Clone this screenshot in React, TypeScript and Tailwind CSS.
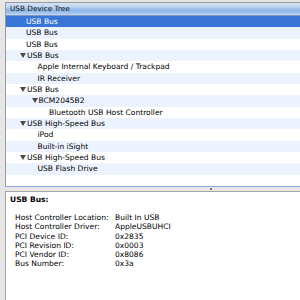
import React from "react";

type Row = { label: string; level: number; tri?: boolean };

const rows: Row[] = [
  { label: "USB Bus", level: 0 },
  { label: "USB Bus", level: 0 },
  { label: "USB Bus", level: 0 },
  { label: "USB Bus", level: 0, tri: true },
  { label: "Apple Internal Keyboard / Trackpad", level: 1 },
  { label: "IR Receiver", level: 1 },
  { label: "USB Bus", level: 0, tri: true },
  { label: "BCM2045B2", level: 1, tri: true },
  { label: "Bluetooth USB Host Controller", level: 2 },
  { label: "USB High-Speed Bus", level: 0, tri: true },
  { label: "iPod", level: 1 },
  { label: "Built-in iSight", level: 1 },
  { label: "USB High-Speed Bus", level: 0, tri: true },
  { label: "USB Flash Drive", level: 1 },
  { label: "", level: 0 },
];

const details: [string, string][] = [
  ["Host Controller Location:", "Built In USB"],
  ["Host Controller Driver:", "AppleUSBUHCI"],
  ["PCI Device ID:", "0x2835"],
  ["PCI Revision ID:", "0x0003"],
  ["PCI Vendor ID:", "0x8086"],
  ["Bus Number:", "0x3a"],
];

const indentClass = ["pl-[14px]", "pl-[25.5px]", "pl-[37px]"];
const textIndentClass = ["pl-[20px]", "pl-[31.5px]", "pl-[43px]"];

function Triangle({ white }: { white?: boolean }) {
  return (
    <svg width="6" height="5" viewBox="0 0 6 5" className="shrink-0">
      <polygon points="0,0 6,0 3,5" fill={white ? "#ffffff" : "#4a4a4a"} />
    </svg>
  );
}

export default function App() {
  return (
    <div
      className="w-[300px] h-[300px] overflow-hidden bg-[#e6e6e6] flex flex-col pt-[2px] pl-[5px] text-black"
      style={{ fontFamily: '"DejaVu Sans", Verdana, sans-serif' }}
    >
      {/* Tree */}
      <div className="flex flex-col border-l border-t border-[#9b9b9b] bg-white">
        <div className="h-[13px] flex items-center pl-[4px] text-[7.3px] text-[#111] border-b border-[#7f98c4] bg-[linear-gradient(to_bottom,#d3e2f5_0%,#c2d7f2_30%,#a5c4ec_45%,#8db5e8_60%,#9dc0ec_80%,#c4d9f4_100%)]">
          USB Device Tree
        </div>
        {rows.map((r, i) => {
          const selected = i === 0;
          const bg = selected ? "bg-[#3875d7] text-white" : i % 2 === 1 ? "bg-[#edf3fe]" : "bg-white";
          return (
            <div key={i} className={`h-[11.33px] flex items-center text-[7.55px] leading-none whitespace-nowrap ${bg}`}>
              {r.tri ? (
                <div className={`flex items-center gap-[1px] ${indentClass[r.level]}`}>
                  <Triangle white={selected} />
                  <span>{r.label}</span>
                </div>
              ) : (
                <div className={textIndentClass[r.level]}>{r.label}</div>
              )}
            </div>
          );
        })}
        <div className="h-[1.5px] bg-[#8ea6e0]" />
      </div>

      {/* Splitter */}
      <div className="h-[4px] flex items-center pl-[205px]">
        <div className="w-[2px] h-[2px] bg-[#555] rounded-full" />
      </div>

      {/* Details */}
      <div className="flex-1 border-l border-t border-[#a5a5a5] bg-white pl-[4px] pt-[3px] text-[7.55px] leading-[9.2px]">
        <div className="font-bold">USB Bus:</div>
        <div className="mt-[8.5px] pl-[5px] grid grid-cols-[100px_1fr]">
          {details.map(([k, v]) => (
            <React.Fragment key={k}>
              <div className="whitespace-nowrap">{k}</div>
              <div className="whitespace-nowrap">{v}</div>
            </React.Fragment>
          ))}
        </div>
      </div>
    </div>
  );
}
